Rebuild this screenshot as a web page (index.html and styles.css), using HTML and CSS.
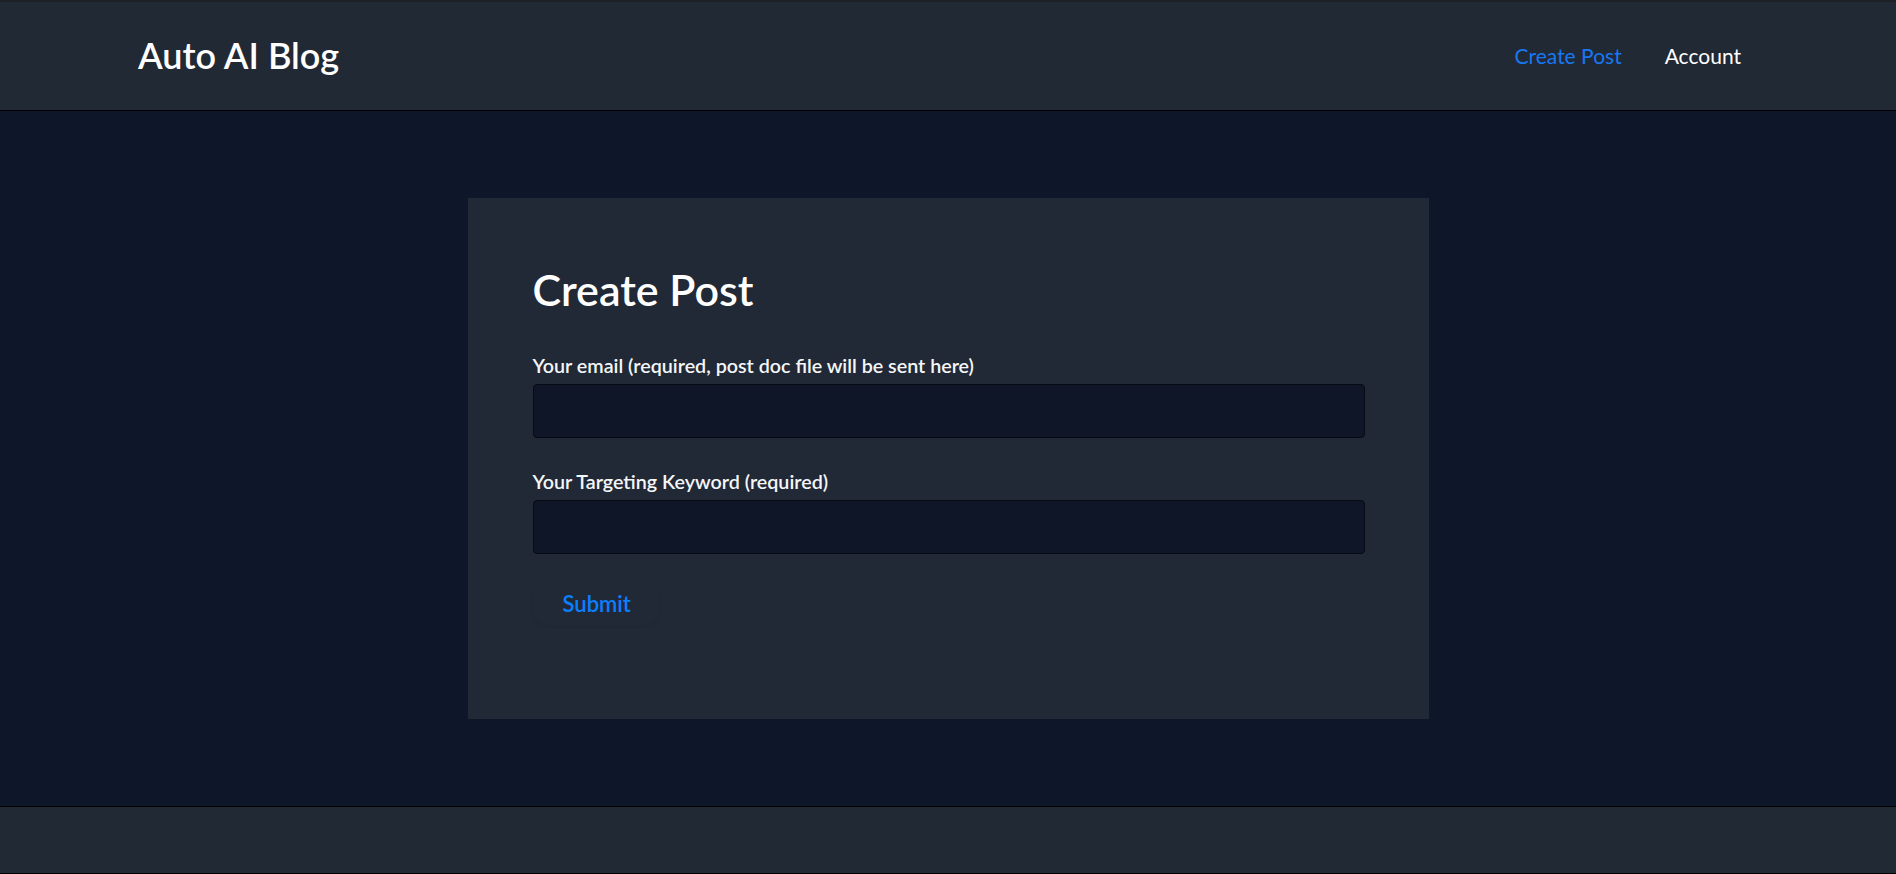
FILE: index.html
```html
<!DOCTYPE html>
<html lang="en">
<head>
    <meta charset="UTF-8">
    <meta name="viewport" content="width=device-width, initial-scale=1.0">
    <title>Auto AI Blog - Create Post</title>
    <link rel="stylesheet" href="styles.css">
</head>
<body>
    <header class="site-header">
        <a class="logo" href="#">Auto AI Blog</a>
        <nav class="nav">
            <a class="nav-link active" href="#">Create Post</a>
            <a class="nav-link" href="#">Account</a>
        </nav>
    </header>

    <main class="content">
        <div class="card">
            <h1 class="card-title">Create Post</h1>
            <form class="post-form">
                <div class="form-group">
                    <label for="email">Your email (required, post doc file will be sent here)</label>
                    <input type="email" id="email" name="email" required>
                </div>
                <div class="form-group">
                    <label for="keyword">Your Targeting Keyword (required)</label>
                    <input type="text" id="keyword" name="keyword" required>
                </div>
                <button type="submit" class="submit-btn">Submit</button>
            </form>
        </div>
    </main>

    <footer class="site-footer"></footer>
</body>
</html>
```

FILE: styles.css
```css
body {
    margin: 0;
    min-height: 100vh;
    display: flex;
    flex-direction: column;
    background-color: #0e1629;
    font-family: Lato, "Open Sans", sans-serif;
    color: #ffffff;
}

a {
    text-decoration: none;
}

/* Header */
.site-header {
    height: 108px;
    display: flex;
    align-items: center;
    justify-content: space-between;
    padding: 0 155px 0 138px;
    background-color: #212935;
    border-top: 2px solid #1d2126;
    border-bottom: 1px solid #000000;
}

.logo {
    color: #ffffff;
    font-size: 36px;
    font-weight: 600;
    line-height: 1.2;
}

.nav {
    display: flex;
    gap: 43px;
}

.nav-link {
    color: #ffffff;
    font-size: 21px;
    line-height: 1.2;
}

.nav-link.active {
    color: #1877f2;
}

/* Main area */
.content {
    flex: 1;
    display: flex;
    align-items: center;
    justify-content: center;
}

.card {
    width: 832px;
    padding: 66px 64px 94px 65px;
    background-color: #212936;
}

.card-title {
    margin: 0 0 38px;
    font-size: 43px;
    font-weight: 600;
    line-height: 52px;
}

.form-group {
    margin-bottom: 32px;
}

.form-group label {
    display: block;
    margin-bottom: 6px;
    font-size: 19.7px;
    font-weight: 600;
    line-height: 24px;
    color: #f5f6f8;
}

.form-group input {
    display: block;
    box-sizing: border-box;
    width: 100%;
    height: 54px;
    padding: 0 14px;
    background-color: #0e1628;
    border: 1px solid #060a14;
    border-radius: 4px;
    color: #ffffff;
    font-family: inherit;
    font-size: 18px;
    outline: none;
}

.submit-btn {
    display: block;
    margin-top: -3px;
    padding: 8px 28px 8px 30px;
    background-color: transparent;
    border: none;
    border-radius: 14px;
    box-shadow: 0 2px 3px rgba(0, 0, 0, 0.05);
    color: #0a80ff;
    font-family: inherit;
    font-size: 22px;
    font-weight: 600;
    line-height: 26px;
    cursor: pointer;
}

/* Footer */
.site-footer {
    height: 66px;
    background-color: #212935;
    border-top: 1px solid #000000;
    border-bottom: 1px solid #000000;
}
```
